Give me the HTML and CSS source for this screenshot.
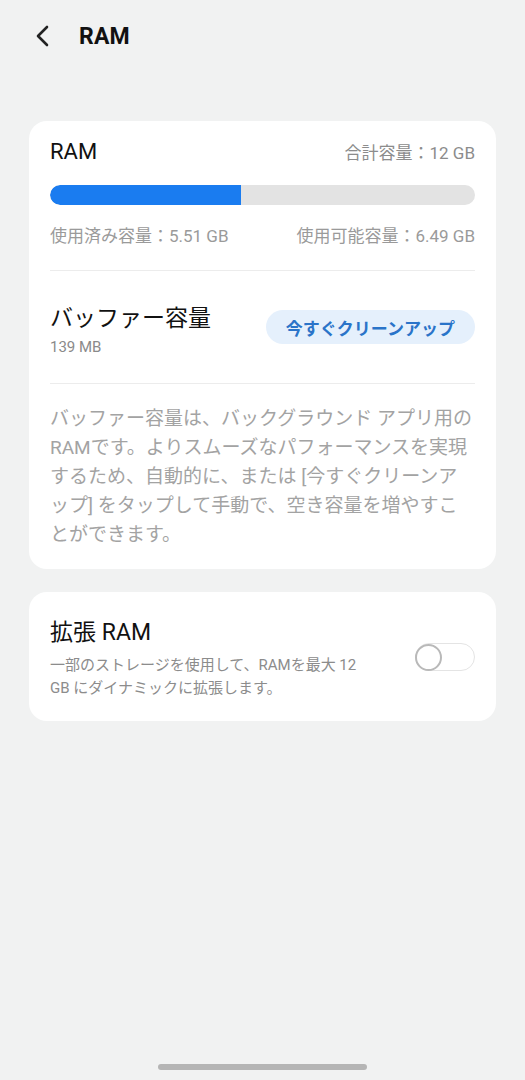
FILE: index.html
```html
<!DOCTYPE html>
<html lang="ja">
<head>
<meta charset="utf-8">
<link rel="stylesheet" href="styles.css">
</head>
<body>
<div class="screen">
  <header class="topbar">
    <svg class="back" width="18" height="22" viewBox="0 0 18 22"><path d="M13 2 L4 11 L13 20" fill="none" stroke="#222" stroke-width="2.6" stroke-linecap="round" stroke-linejoin="round"/></svg>
    <h1 class="title">RAM</h1>
  </header>

  <section class="card">
    <div class="ram-block">
      <div class="row-between">
        <span class="ram-title">RAM</span>
        <span class="total">合計容量：12 GB</span>
      </div>
      <div class="bar"><div class="bar-fill" style="width:45%"></div></div>
      <div class="row-between stats">
        <span>使用済み容量：5.51 GB</span>
        <span>使用可能容量：6.49 GB</span>
      </div>
    </div>
    <div class="divider"></div>
    <div class="buffer">
      <div class="buffer-text">
        <div class="buffer-title">バッファー容量</div>
        <div class="buffer-size">139 MB</div>
      </div>
      <button class="clean-btn">今すぐクリーンアップ</button>
    </div>
    <div class="divider"></div>
    <p class="desc">バッファー容量は、バックグラウンド アプリ用のRAMです。よりスムーズなパフォーマンスを実現するため、自動的に、または [今すぐクリーンアップ] をタップして手動で、空き容量を増やすことができます。</p>
  </section>

  <section class="card card2">
    <div class="ext-text">
      <div class="ext-title">拡張 RAM</div>
      <div class="ext-desc">一部のストレージを使用して、RAMを最大 12 GB にダイナミックに拡張します。</div>
    </div>
    <div class="toggle"><div class="knob"></div></div>
  </section>

  <div class="spacer"></div>
  <div class="home"></div>
</div>
</body>
</html>
```
FILE: styles.css
```css
html, body {
  margin: 0;
  padding: 0;
  background: #f1f2f2;
}
body {
  font-family: Roboto, "Noto Sans CJK JP", sans-serif;
  color: #111;
}
.screen {
  width: 525px;
  height: 1080px;
  display: flex;
  flex-direction: column;
  box-sizing: border-box;
  padding: 0 29px;
}
.topbar {
  display: flex;
  align-items: center;
  height: 72px;
  padding-left: 5px;
}
.back {
  display: block;
}
.title {
  margin: 0 0 0 27px;
  font-size: 23px;
  font-weight: 700;
  letter-spacing: 0.2px;
}
.card {
  margin-top: 49px;
  background: #fff;
  border-radius: 18px;
}
.ram-block {
  padding: 18px 21px 22px;
}
.row-between {
  display: flex;
  justify-content: space-between;
  align-items: baseline;
}
.ram-title {
  font-size: 22px;
  line-height: 26px;
}
.total {
  font-size: 17px;
  color: #8c8c8c;
}
.bar {
  margin-top: 20px;
  height: 20px;
  border-radius: 10px;
  background: #e3e3e3;
  overflow: hidden;
}
.bar-fill {
  height: 100%;
  background: #1a7cf0;
  border-radius: 10px 0 0 10px;
}
.stats {
  margin-top: 19px;
  font-size: 17px;
  line-height: 24px;
  color: #9a9a9a;
}
.divider {
  height: 1px;
  background: #ececec;
  margin: 0 21px;
}
.buffer {
  display: flex;
  justify-content: space-between;
  align-items: center;
  padding: 33px 21px 26px;
}
.buffer-title {
  font-size: 23px;
  line-height: 30px;
}
.buffer-size {
  font-size: 15px;
  line-height: 20px;
  color: #8a8a8a;
  margin-top: 3px;
}
.clean-btn {
  font-family: inherit;
  border: none;
  background: #e5f0fc;
  color: #2a74c9;
  font-size: 17px;
  font-weight: 700;
  height: 34px;
  padding: 0 20px;
  border-radius: 17px;
  margin-top: -7px;
}
.desc {
  margin: 0;
  padding: 20px 21px 20px;
  font-size: 19px;
  line-height: 29px;
  color: #a3a3a3;
}
.card2 {
  margin-top: 23px;
  display: flex;
  align-items: center;
  padding: 26px 21px 21px;
}
.ext-text {
  flex: 1;
  padding-right: 38px;
}
.ext-title {
  font-size: 23px;
  line-height: 30px;
}
.ext-desc {
  margin-top: 6px;
  font-size: 15px;
  line-height: 23px;
  color: #8c8c8c;
}
.toggle {
  width: 58px;
  height: 26px;
  border: 1.5px solid #e4e4e4;
  border-radius: 14px;
  display: flex;
  align-items: center;
  flex-shrink: 0;
  margin-top: -4px;
}
.knob {
  border: 2.5px solid #b9b9b9;
  border-radius: 50%;
  background: #fff;
  box-sizing: border-box;
  width: 27px;
  height: 27px;
  margin-left: -1px;
}
.spacer {
  flex: 1;
}
.home {
  align-self: center;
  width: 209px;
  height: 6px;
  border-radius: 3px;
  background: #b5b5b5;
  margin-bottom: 10px;
}
```
